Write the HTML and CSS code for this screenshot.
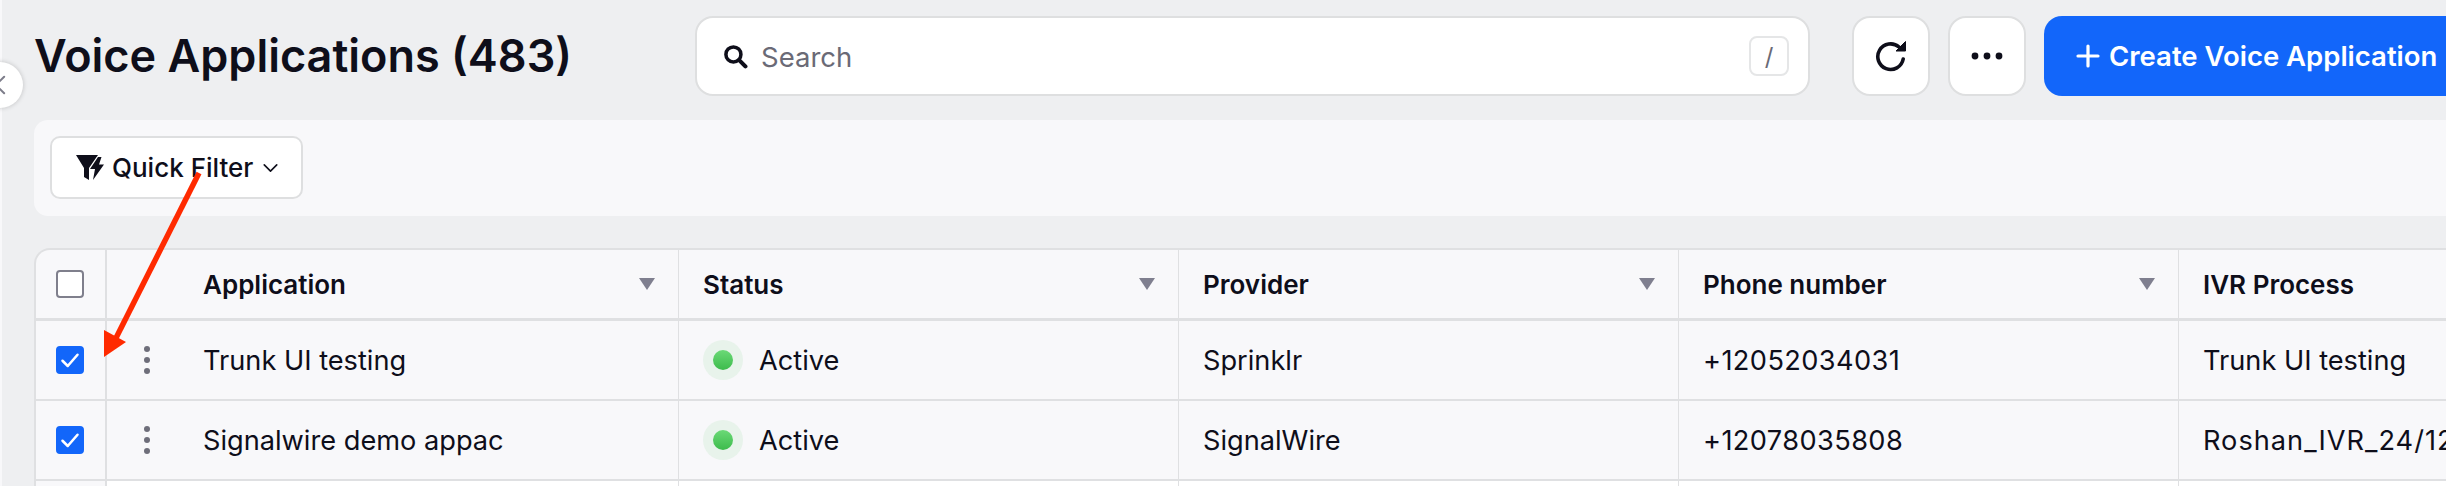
FILE: index.html
```html
<!DOCTYPE html>
<html lang="en">
<head>
<meta charset="utf-8">
<title>Voice Applications</title>
<link rel="stylesheet" href="styles.css">
</head>
<body>
<div class="page">
  <header class="topbar">
    <h1 class="title">Voice Applications (483)</h1>
    <div class="search">
      <svg class="search-icon" viewBox="0 0 24 24"><circle cx="10" cy="10" r="7.2" fill="none" stroke="#0e0e1a" stroke-width="3.4"/><path d="M15.5 15.5 21.5 21.5" stroke="#0e0e1a" stroke-width="4" stroke-linecap="round"/></svg>
      <span class="search-text">Search</span>
      <span class="kbd">/</span>
    </div>
    <button class="icon-btn first"><svg class="ic-refresh" viewBox="0 0 32 32"><path d="M28.2 19A12.8 12.8 0 1 1 24 7" fill="none" stroke="#0e0e1a" stroke-width="3.6" stroke-linecap="round"/><path d="M30.5 1.5V11H21Z" fill="#0e0e1a" stroke="#0e0e1a" stroke-linejoin="round"/></svg></button>
    <button class="icon-btn"><svg class="ic-more" viewBox="0 0 32 8"><circle cx="4" cy="4" r="3.4"/><circle cx="16" cy="4" r="3.4"/><circle cx="28" cy="4" r="3.4"/></svg></button>
    <button class="create"><svg class="ic-plus" viewBox="0 0 24 24"><path d="M12 2v20M2 12h20" stroke="#fff" stroke-width="3.2" stroke-linecap="round"/></svg><span>Create Voice Application</span></button>
  </header>

  <section class="filters">
    <button class="quick">
      <svg class="ic-filter" viewBox="0 0 28 25"><path d="M0 0H22L13 13V25L8 22V13Z" fill="#0e0e1a"/><path d="M22 2 14 14H19L17 25 28 9.5H23L25.5 2Z" fill="#0e0e1a" stroke="#fff" stroke-width="1.2" paint-order="stroke"/></svg>
      <span>Quick Filter</span>
      <svg class="ic-chev" viewBox="0 0 16 9"><path d="M1 1 8 8 15 1" fill="none" stroke="#0e0e1a" stroke-width="1.8" stroke-linecap="round" stroke-linejoin="round"/></svg>
    </button>
  </section>

  <div class="table">
    <div class="row head">
      <div class="cell check"><span class="box"></span></div>
      <div class="cell app"><span class="kebab-space"></span><span class="label">Application</span><span class="tri"></span></div>
      <div class="cell col"><span class="label">Status</span><span class="tri"></span></div>
      <div class="cell col"><span class="label">Provider</span><span class="tri"></span></div>
      <div class="cell col"><span class="label">Phone number</span><span class="tri"></span></div>
      <div class="cell col"><span class="label">IVR Process</span></div>
    </div>
    <div class="row">
      <div class="cell check"><span class="box on"><svg viewBox="0 0 16 16"><path d="M3 8.5 6.5 12 13 4.5" fill="none" stroke="#fff" stroke-width="1.7" stroke-linecap="round" stroke-linejoin="round"/></svg></span></div>
      <div class="cell app"><span class="kebab-space"><i></i><i></i><i></i></span><span>Trunk UI testing</span></div>
      <div class="cell col"><span class="dot"><b></b></span><span>Active</span></div>
      <div class="cell col">Sprinklr</div>
      <div class="cell col phone">+12052034031</div>
      <div class="cell col nowrap">Trunk UI testing</div>
    </div>
    <div class="row">
      <div class="cell check"><span class="box on"><svg viewBox="0 0 16 16"><path d="M3 8.5 6.5 12 13 4.5" fill="none" stroke="#fff" stroke-width="1.7" stroke-linecap="round" stroke-linejoin="round"/></svg></span></div>
      <div class="cell app"><span class="kebab-space"><i></i><i></i><i></i></span><span>Signalwire demo appac</span></div>
      <div class="cell col"><span class="dot"><b></b></span><span>Active</span></div>
      <div class="cell col">SignalWire</div>
      <div class="cell col phone">+12078035808</div>
      <div class="cell col nowrap wide">Roshan_IVR_24/12/</div>
    </div>
    <div class="row next">
      <div class="cell check"></div>
      <div class="cell app"></div>
      <div class="cell col"></div>
      <div class="cell col"></div>
      <div class="cell col"></div>
      <div class="cell col"></div>
    </div>
  </div>
</div>

<button class="collapse" aria-label="Collapse"><svg viewBox="0 0 12 20"><path d="M10 1 1 10 10 19" fill="none" stroke="#7d7d8a" stroke-width="2.2" stroke-linecap="round" stroke-linejoin="round"/></svg></button>

<svg class="annotation" viewBox="0 0 2446 486"><path d="M199 173 116 338" stroke="#ff2a00" stroke-width="5.5" fill="none"/><path d="M104 357 104 330 126 342Z" fill="#ff2a00"/></svg>
</body>
</html>
```
FILE: styles.css
```css
* { box-sizing: border-box; }
html, body { margin: 0; padding: 0; }
body {
  width: 2446px;
  height: 486px;
  overflow: hidden;
  position: relative;
  background: #eeeff1;
  color: #0e0e1a;
  font-family: Inter, "Liberation Sans", sans-serif;
  font-size: 27.2px;
}
button { font-family: inherit; color: inherit; cursor: pointer; }

.page { padding: 16px 0 0 32px; height: 486px; overflow: hidden; border-left: 2px solid #f8f8fa; }

.topbar { display: flex; align-items: stretch; height: 80px; }
.title { flex: 0 0 661px; margin: 0; font-size: 45px; font-weight: 600; line-height: 80px; white-space: nowrap; }
.search {
  flex: 0 0 1115px;
  display: flex;
  align-items: center;
  padding: 0 19px 0 26px;
  background: #fff;
  border: 2px solid #dedfe0;
  border-radius: 18px;
}
.search-icon { width: 25px; height: 25px; flex: none; }
.search-text { flex: 1; margin-left: 13px; color: #6a6a76; font-size: 27.5px; line-height: 42px; padding-top: 1px; }
.kbd {
  width: 40px; height: 40px;
  display: flex; align-items: center; justify-content: center;
  border: 2px solid #e5e6e7; border-radius: 8px;
  color: #6a6a76; font-size: 24px;
}
.icon-btn {
  flex: 0 0 78px;
  margin-left: 18px;
  padding: 0;
  display: flex; align-items: center; justify-content: center;
  background: #fff;
  border: 2px solid #dedfe0;
  border-radius: 18px;
}
.icon-btn.first { margin-left: 42px; }
.ic-refresh { width: 32px; height: 32px; }
.ic-more { width: 32px; height: 8px; fill: #0e0e1a; }
.create {
  flex: 1;
  margin-left: 18px;
  padding: 0 0 0 32px;
  display: flex; align-items: center; gap: 9px;
  background: #1266fa;
  border: 0;
  border-radius: 18px 0 0 18px;
  color: #fff;
  font-size: 27.5px;
  font-weight: 600;
  white-space: nowrap;
}
.ic-plus { width: 24px; height: 24px; flex: none; }

.filters {
  margin-top: 24px;
  height: 96px;
  padding: 16px;
  background: #f8f8fa;
  border-radius: 14px 0 0 14px;
}
.quick {
  width: 253px;
  height: 63px;
  padding: 0 0 0 24px;
  display: flex; align-items: center;
  background: #fff;
  border: 2px solid #dedfe0;
  border-radius: 10px;
  font-size: 26px;
  font-weight: 500;
  white-space: nowrap;
}
.ic-filter { width: 28px; height: 25px; flex: none; }
.quick span { margin-left: 8px; }
.ic-chev { width: 15px; height: 8px; margin-left: 10px; flex: none; }

.table {
  margin-top: 32px;
  border-top: 2px solid #dfe0e2;
  border-left: 2px solid #dfe0e2;
  border-radius: 16px 0 0 0;
  overflow: hidden;
  background: #f8f8fa;
}
.row { display: flex; height: 80px; border-bottom: 2px solid #dfe0e2; }
.row.head { height: 71px; border-bottom-width: 3px; font-weight: 600; font-size: 26px; }
.cell { display: flex; align-items: center; flex: none; white-space: nowrap; }
.check { width: 71px; padding-left: 20px; border-right: 2px solid #dfe0e2; }
.app { width: 572px; border-right: 1px solid #dfe0e2; padding-right: 23px; }
.col { width: 500px; padding-left: 24px; padding-right: 23px; border-right: 1px solid #dfe0e2; }
.col.nowrap { overflow: hidden; padding-right: 0; }
.phone { letter-spacing: 0.4px; }
.wide { letter-spacing: 1px; }
.kebab-space { flex: 0 0 96px; display: flex; flex-direction: column; align-items: flex-start; gap: 5px; padding-left: 37px; }
.kebab-space i { width: 6px; height: 6px; border-radius: 50%; background: #6e6e7a; }
.label { flex: 1; }
.tri {
  width: 0; height: 0;
  border-left: 8.5px solid transparent;
  border-right: 8.5px solid transparent;
  border-top: 12px solid #7f7f8f;
}
.box {
  width: 28px; height: 28px;
  background: #fff;
  border: 2px solid #7f7f8c;
  border-radius: 4px;
  display: block;
}
.box.on { background: #1266fa; border-color: #1266fa; }
.box.on svg { display: block; width: 24px; height: 24px; }
.dot {
  width: 40px; height: 40px;
  margin-right: 16px;
  border-radius: 50%;
  background: #e8f3eb;
  display: flex; align-items: center; justify-content: center;
}
.dot b { width: 20px; height: 20px; border-radius: 50%; background: linear-gradient(#6bd977, #3dbb4c); }
.row.next { background: #fff; }
.row.next .check { background: #f8f8fa; }

.collapse {
  position: absolute;
  left: -23px; top: 62px;
  width: 46px; height: 46px;
  padding: 0;
  background: #fff;
  border: 0;
  border-radius: 50%;
  box-shadow: 0 0 5px rgba(0,0,0,.2);
}
.collapse svg { position: absolute; left: 18px; top: 13px; width: 11px; height: 20px; }
.annotation { position: absolute; left: 0; top: 0; width: 2446px; height: 486px; pointer-events: none; }
```
